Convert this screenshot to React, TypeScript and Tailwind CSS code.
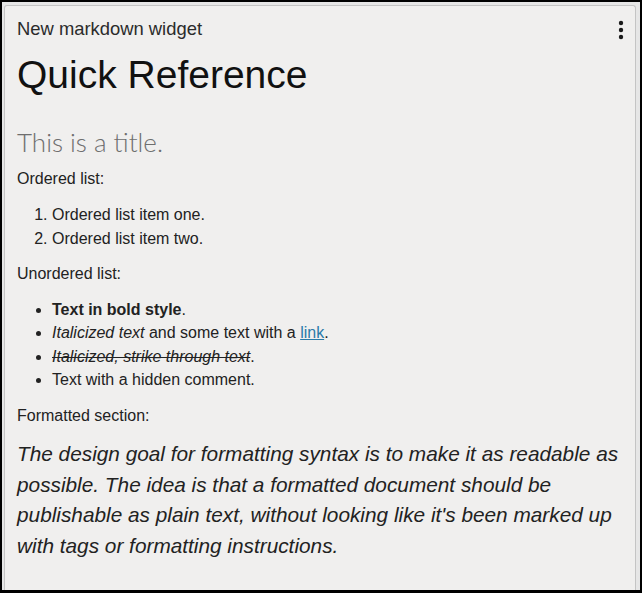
import React from "react";

export default function App() {
  const sans = { fontFamily: '"Liberation Sans", Arial, sans-serif' } as React.CSSProperties;
  return (
    <div className="w-[642px] h-[593px] bg-black pl-[2px] pr-[2px] pt-[2px] pb-[3px] flex">
      <div className="flex-1 flex bg-[#e6e6e6] pl-[2px] pr-[4px] pt-[3px]">
        <div
          className="flex-1 flex flex-col bg-[#f0efee] border border-b-0 border-[#c4c4c4] rounded-t-[3px] pt-[11px] pl-[12px] pr-[11px] text-[#222] overflow-hidden"
          style={sans}
        >
          <div className="flex items-start justify-between h-[24px]">
            <span className="text-[18.4px] leading-[24px] text-[#2b2b2b]">New markdown widget</span>
            <svg width="6" height="20" viewBox="0 0 6 20" className="mt-[3px]">
              <circle cx="3" cy="3" r="2.2" fill="#1a1a1a" />
              <circle cx="3" cy="10" r="2.2" fill="#1a1a1a" />
              <circle cx="3" cy="17" r="2.2" fill="#1a1a1a" />
            </svg>
          </div>
          <h1 className="mt-[11px] text-[39px] leading-[46.8px] text-[#111]">Quick Reference</h1>
          <h2
            className="mt-[26px] text-[26px] leading-[34px] font-light text-[#6e6e6e]"
            style={{ fontFamily: 'Lato, "Open Sans", sans-serif' }}
          >
            This is a title.
          </h2>
          <p className="mt-[8.5px] text-[16px] leading-[24px]">Ordered list:</p>
          <ol className="mt-[12px] list-decimal pl-[35px] text-[16px] leading-[24px]">
            <li>Ordered list item one.</li>
            <li>Ordered list item two.</li>
          </ol>
          <p className="mt-[10.6px] text-[16px] leading-[24px]">Unordered list:</p>
          <ul className="mt-[12px] list-disc pl-[35px] text-[16px] leading-[23.4px]">
            <li>
              <strong className="font-bold">Text in bold style</strong>.
            </li>
            <li>
              <em className="italic">Italicized text</em> and some text with a{" "}
              <a className="text-[#2a7aa8] underline">link</a>.
            </li>
            <li>
              <em className="italic line-through">Italicized, strike through text</em>.
            </li>
            <li>Text with a hidden comment.</li>
          </ul>
          <p className="mt-[12px] text-[16px] leading-[24px]">Formatted section:</p>
          <p className="mt-[11.6px] text-[20.8px] leading-[30.6px] italic text-[#222]">
            The design goal for formatting syntax is to make it as readable as possible. The idea is that a
            formatted document should be publishable as plain text, without looking like it's been marked up
            with tags or formatting instructions.
          </p>
        </div>
      </div>
    </div>
  );
}
